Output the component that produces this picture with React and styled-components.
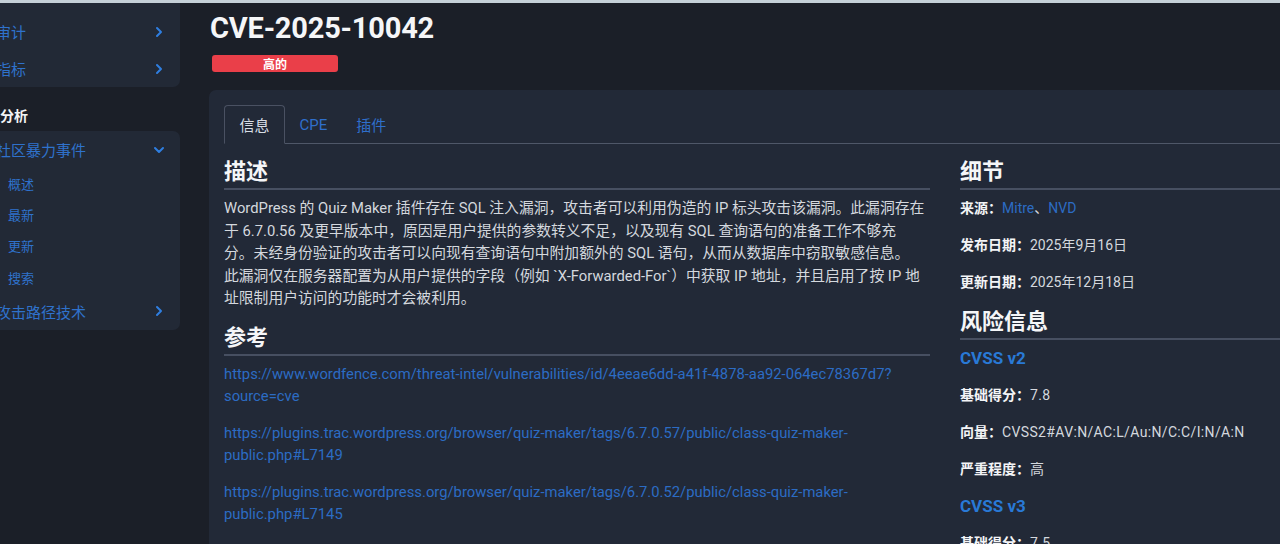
import styled, { createGlobalStyle } from "styled-components"
import { ChevronRight, ChevronDown } from "lucide-react"

const GlobalStyle = createGlobalStyle`
    html, body {
        margin: 0;
        padding: 0;
        background-color: #1b1f28;
        overflow: hidden;
    }
    body {
        font-family: Roboto, "Noto Sans CJK SC", sans-serif;
        color: #d4d8de;
    }
    a {
        text-decoration: none;
    }
`

const Page = styled.div`
    height: 544px;
    border-top: 3px solid #c5d0d8;
    box-sizing: border-box;
    display: flex;
    align-items: flex-start;
`

const Sidebar = styled.aside`
    width: 214px;
    margin-left: -34px;
    flex-shrink: 0;
    display: flex;
    flex-direction: column;
`

const NavCard = styled.div`
    background-color: #222936;
    border-radius: ${p => p.$top ? "0 0 7px 7px" : "7px"};
    padding-top: ${p => p.$top ? "10px" : "0"};
    display: flex;
    flex-direction: column;
`

const NavItem = styled.a`
    height: 37px;
    display: flex;
    align-items: center;
    justify-content: space-between;
    padding: 0 13px 0 30px;
    font-size: 15px;
    color: #2f72cc;
    svg {
        color: #2f7ee0;
    }
`

const SubItem = styled.a`
    height: 31.2px;
    display: flex;
    align-items: center;
    padding-left: 42px;
    font-size: 13px;
    color: #2f72cc;
`

const SectionTitle = styled.div`
    padding-left: 34px;
    margin: 19px 0 5px;
    line-height: 20px;
    font-size: 14px;
    font-weight: 700;
    color: #f3f4f6;
`

const Main = styled.main`
    margin-left: 29px;
    width: 1110px;
    flex-shrink: 0;
    display: flex;
    flex-direction: column;
`

const Title = styled.h1`
    margin: 7px 0 0 1px;
    font-size: 29px;
    letter-spacing: -0.2px;
    line-height: 36px;
    font-weight: 700;
    color: #f5f6f8;
`

const Badge = styled.span`
    margin: 9px 0 0 3px;
    width: 126px;
    height: 17px;
    border-radius: 3px;
    background-color: #ea3f49;
    color: #fff;
    font-size: 12px;
    font-weight: 700;
    display: flex;
    align-items: center;
    justify-content: center;
`

const Panel = styled.section`
    margin-top: 18px;
    background-color: #222937;
    border-radius: 7px 0 0 0;
    padding: 15px 15px 0;
    height: 460px;
`

const Tabs = styled.div`
    display: flex;
    border-bottom: 1px solid #4f5768;
`

const Tab = styled.div`
    height: 37px;
    padding: 0 ${p => p.$active ? "14.5px" : "13.5px"};
    display: flex;
    align-items: center;
    font-size: 15px;
    margin-bottom: -1px;
    border: 1px solid ${p => p.$active ? "#4a5162" : "transparent"};
    border-bottom-color: ${p => p.$active ? "#222937" : "transparent"};
    border-radius: 4px 4px 0 0;
    color: ${p => p.$active ? "#d8dde5" : "#2f6fcc"};
`

const Columns = styled.div`
    display: grid;
    grid-template-columns: 706px 340px;
    gap: 30px;
    padding-top: 14px;
`

const Column = styled.div`
    display: flex;
    flex-direction: column;
`

const Heading = styled.h2`
    margin: ${p => p.$spaced ? "14px" : "0"} 0 0;
    font-size: 22px;
    line-height: 28px;
    padding-bottom: 2px;
    font-weight: 700;
    color: #f5f6f8;
    border-bottom: 2px solid #474f61;
`

const Paragraph = styled.p`
    margin: 7px 0 0;
    font-size: 14.8px;
    line-height: 22.5px;
    color: #d4d8de;
    white-space: nowrap;
`

const RefLink = styled.a`
    display: block;
    margin-top: ${p => p.$first ? "7px" : "14px"};
    font-size: 14.8px;
    line-height: 22.5px;
    color: #2c6cc4;
    white-space: nowrap;
`

const Rows = styled.div`
    padding-top: 7px;
    display: flex;
    flex-direction: column;
    gap: 15px;
    & + h2 {
        margin-top: 15px;
    }
`

const Row = styled.div`
    line-height: 22px;
    font-size: 14px;
    color: #d4d8de;
    white-space: nowrap;
    b {
        color: #f3f4f6;
        font-weight: 700;
    }
    a {
        color: #2c6cc4;
    }
`

const Value = styled.span`
    letter-spacing: 0.35px;
`

const Sub = styled.div`
    line-height: 22px;
    font-size: 17px;
    font-weight: 700;
    color: #2979d6;
`

export default function App() {
  return (
    <>
      <GlobalStyle />
      <Page>
        <Sidebar>
          <NavCard $top>
            <NavItem>审计<ChevronRight size={16} strokeWidth={3} /></NavItem>
            <NavItem>指标<ChevronRight size={16} strokeWidth={3} /></NavItem>
          </NavCard>
          <SectionTitle>分析</SectionTitle>
          <NavCard>
            <NavItem>社区暴力事件<ChevronDown size={16} strokeWidth={3} /></NavItem>
            <SubItem>概述</SubItem>
            <SubItem>最新</SubItem>
            <SubItem>更新</SubItem>
            <SubItem>搜索</SubItem>
            <NavItem>攻击路径技术<ChevronRight size={16} strokeWidth={3} /></NavItem>
          </NavCard>
        </Sidebar>
        <Main>
          <Title>CVE-2025-10042</Title>
          <Badge>高的</Badge>
          <Panel>
            <Tabs>
              <Tab $active>信息</Tab>
              <Tab>CPE</Tab>
              <Tab>插件</Tab>
            </Tabs>
            <Columns>
              <Column>
                <Heading>描述</Heading>
                <Paragraph>
                  WordPress 的 Quiz Maker 插件存在 SQL 注入漏洞，攻击者可以利用伪造的 IP 标头攻击该漏洞。此漏洞存在<br />
                  于 6.7.0.56 及更早版本中，原因是用户提供的参数转义不足，以及现有 SQL 查询语句的准备工作不够充<br />
                  分。未经身份验证的攻击者可以向现有查询语句中附加额外的 SQL 语句，从而从数据库中窃取敏感信息。<br />
                  此漏洞仅在服务器配置为从用户提供的字段（例如 `X-Forwarded-For`）中获取 IP 地址，并且启用了按 IP 地<br />
                  址限制用户访问的功能时才会被利用。
                </Paragraph>
                <Heading $spaced>参考</Heading>
                <RefLink $first>
                  https://www.wordfence.com/threat-intel/vulnerabilities/id/4eeae6dd-a41f-4878-aa92-064ec78367d7?<br />source=cve
                </RefLink>
                <RefLink>
                  https://plugins.trac.wordpress.org/browser/quiz-maker/tags/6.7.0.57/public/class-quiz-maker-<br />public.php#L7149
                </RefLink>
                <RefLink>
                  https://plugins.trac.wordpress.org/browser/quiz-maker/tags/6.7.0.52/public/class-quiz-maker-<br />public.php#L7145
                </RefLink>
              </Column>
              <Column>
                <Heading>细节</Heading>
                <Rows>
                  <Row><b>来源：</b><a>Mitre</a>、<a>NVD</a></Row>
                  <Row><b>发布日期：</b>2025年9月16日</Row>
                  <Row><b>更新日期：</b>2025年12月18日</Row>
                </Rows>
                <Heading>风险信息</Heading>
                <Rows>
                  <Sub>CVSS v2</Sub>
                  <Row><b>基础得分：</b><Value>7.8</Value></Row>
                  <Row><b>向量：</b><Value>CVSS2#AV:N/AC:L/Au:N/C:C/I:N/A:N</Value></Row>
                  <Row><b>严重程度：</b>高</Row>
                  <Sub>CVSS v3</Sub>
                  <Row><b>基础得分：</b><Value>7.5</Value></Row>
                </Rows>
              </Column>
            </Columns>
          </Panel>
        </Main>
      </Page>
    </>
  )
}
